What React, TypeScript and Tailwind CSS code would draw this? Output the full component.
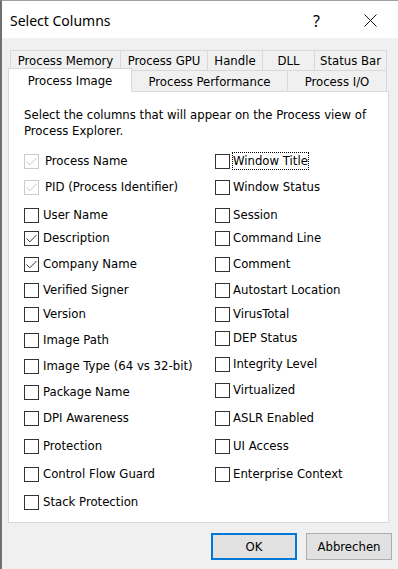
type Col = { label: string; mt: string; checked?: boolean; disabled?: boolean; focused?: boolean };

const leftColumn: Col[] = [
    { label: 'Process Name', mt: 'mt-[14px]', checked: true, disabled: true },
    { label: 'PID (Process Identifier)', mt: 'mt-[10px]', checked: true, disabled: true },
    { label: 'User Name', mt: 'mt-[12px]' },
    { label: 'Description', mt: 'mt-[7px]', checked: true },
    { label: 'Company Name', mt: 'mt-[10px]', checked: true },
    { label: 'Verified Signer', mt: 'mt-[10px]' },
    { label: 'Version', mt: 'mt-[8px]' },
    { label: 'Image Path', mt: 'mt-[10px]' },
    { label: 'Image Type (64 vs 32-bit)', mt: 'mt-[10px]' },
    { label: 'Package Name', mt: 'mt-[10px]' },
    { label: 'DPI Awareness', mt: 'mt-[10px]' },
    { label: 'Protection', mt: 'mt-[12px]' },
    { label: 'Control Flow Guard', mt: 'mt-[12px]' },
    { label: 'Stack Protection', mt: 'mt-[12px]' },
];

const rightColumn: Col[] = [
    { label: 'Window Title', mt: 'mt-[14px]', focused: true },
    { label: 'Window Status', mt: 'mt-[10px]' },
    { label: 'Session', mt: 'mt-[12px]' },
    { label: 'Command Line', mt: 'mt-[7px]' },
    { label: 'Comment', mt: 'mt-[10px]' },
    { label: 'Autostart Location', mt: 'mt-[10px]' },
    { label: 'VirusTotal', mt: 'mt-[8px]' },
    { label: 'DEP Status', mt: 'mt-[8px]' },
    { label: 'Integrity Level', mt: 'mt-[10px]' },
    { label: 'Virtualized', mt: 'mt-[10px]' },
    { label: 'ASLR Enabled', mt: 'mt-[12px]' },
    { label: 'UI Access', mt: 'mt-[12px]' },
    { label: 'Enterprise Context', mt: 'mt-[12px]' },
];

const topTabs = [
    { label: 'Process Memory', w: 'w-[110px]' },
    { label: 'Process GPU', w: 'w-[87px]' },
    { label: 'Handle', w: 'w-[55px]' },
    { label: 'DLL', w: 'w-[52px]' },
    { label: 'Status Bar', w: 'w-[73px]' },
];

function CheckBox({ checked, disabled }: { checked?: boolean; disabled?: boolean }) {
    return (
        <span
            className={`w-[15px] h-[15px] shrink-0 border bg-white flex items-center justify-center ${
                disabled ? 'border-[#cccccc]' : 'border-[#333333]'
            }`}
        >
            {checked && (
                <svg width="13" height="13" viewBox="0 0 13 13" fill="none">
                    <path
                        d="M1.5 6.5 L4.8 9.8 L11.5 3"
                        stroke={disabled ? '#c8c8c8' : '#333333'}
                        strokeWidth="1"
                    />
                </svg>
            )}
        </span>
    );
}

function Option({ col, right }: { col: Col; right?: boolean }) {
    return (
        <div className={`flex items-center h-[16px] ${col.mt}`}>
            <CheckBox checked={col.checked} disabled={col.disabled} />
            <span
                className={`leading-[16px] whitespace-nowrap border ${
                    col.focused ? 'border-dotted border-black' : 'border-transparent'
                } ${col.disabled ? 'ml-[5px]' : right ? 'ml-[2px]' : 'ml-[3px]'}`}
            >
                {col.label}
            </span>
        </div>
    );
}

export default function App() {
    return (
        <div className="w-[398px] h-[569px] overflow-hidden bg-[#f0f0f0] border-l-2 border-l-[#707070] border-t border-t-[#a0a0a0] font-['DejaVu_Sans_Condensed',sans-serif] text-[13px] text-black">
            {/* title bar */}
            <div className="h-[37px] bg-white flex items-center pl-[8px] pt-[2px]">
                <span className="font-['Noto_Sans',sans-serif] text-[14px]">Select Columns</span>
                <span className="ml-auto mr-[44px] font-['Noto_Sans',sans-serif] text-[16px]">?</span>
                <svg className="mr-[21px]" width="13" height="13" viewBox="0 0 13 13">
                    <path d="M0.5 0.5 L12.5 12.5 M12.5 0.5 L0.5 12.5" stroke="#111" strokeWidth="1" />
                </svg>
            </div>

            {/* tabs */}
            <div className="mt-[12px] ml-[8px] flex h-[20px]">
                {topTabs.map((t, i) => (
                    <div
                        key={t.label}
                        className={`${t.w} h-[20px] border-t border-l border-[#d9d9d9] flex items-center justify-center ${
                            i === topTabs.length - 1 ? 'border-r' : ''
                        }`}
                    >
                        {t.label}
                    </div>
                ))}
            </div>
            <div className="ml-[6px] flex h-[21px]">
                <div className="relative z-10 w-[124px] h-[24px] -mt-[2px] bg-white border border-b-0 border-[#d9d9d9] flex justify-center pt-[2px]">
                    Process Image
                </div>
                <div className="w-[155px] h-[21px] border-t border-[#d9d9d9] flex items-center justify-center pt-[2px]">
                    Process Performance
                </div>
                <div className="w-[100px] h-[21px] border-t border-l border-r border-[#d9d9d9] flex items-center justify-center pt-[2px]">
                    Process I/O
                </div>
            </div>

            {/* panel */}
            <div className="ml-[6px] w-[381px] h-[432px] bg-white border border-[#d9d9d9] pt-[15px] pl-[15px]">
                <p className="leading-[16px]">
                    Select the columns that will appear on the Process view of
                    <br />
                    Process Explorer.
                </p>
                <div className="flex">
                    <div className="w-[191px] flex flex-col">
                        {leftColumn.map((c) => (
                            <Option key={c.label} col={c} />
                        ))}
                    </div>
                    <div className="flex flex-col">
                        {rightColumn.map((c) => (
                            <Option key={c.label} col={c} right />
                        ))}
                    </div>
                </div>
            </div>

            {/* buttons */}
            <div className="flex justify-end gap-[9px] mt-[10px] pr-[6px]">
                <button className="w-[86px] h-[27px] bg-[#e1e1e1] border-2 border-[#0078d7]">OK</button>
                <button className="w-[86px] h-[27px] bg-[#e1e1e1] border border-[#adadad]">Abbrechen</button>
            </div>
        </div>
    );
}
